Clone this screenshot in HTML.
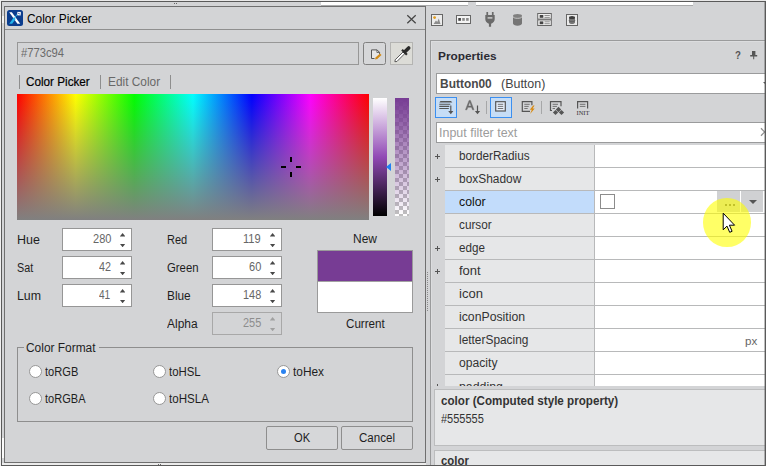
<!DOCTYPE html>
<html lang="en">
<head>
<meta charset="utf-8">
<title>Color Picker</title>
<style>
*{box-sizing:border-box;margin:0;padding:0}
html,body{width:766px;height:466px;overflow:hidden;background:#d3d4d6}
body{position:relative;font-family:"Liberation Sans",sans-serif;font-size:12px;color:#1e1e1e}
.a{position:absolute}
.t{position:absolute;white-space:nowrap;transform-origin:0 50%;display:block}
.t.clip{clip-path:inset(0 0 8.8px 0)}
.spin{position:absolute;width:70px;height:23px;background:#fff;border:1px solid #969696}
.spin.dis{background:#d3d4d6;border-color:#a8a8a8}
.spin i{position:absolute;left:56.8px;width:5.6px;height:3.5px;background:#484848}
.spin i.u{top:4.1px;clip-path:polygon(50% 0,100% 100%,0 100%)}
.spin i.d{top:14.7px;clip-path:polygon(0 0,100% 0,50% 100%)}
.spin.dis i{background:#a0a0a0}
.radio{position:absolute;width:13px;height:13px;border-radius:50%;background:#fff;border:1px solid #979797}
.radio.on::after{content:"";position:absolute;left:3px;top:3px;width:5px;height:5px;border-radius:50%;background:#2a82f0}
.btn{position:absolute;height:24px;border:1px solid #8e8e8e;border-radius:2px;background:#d6d7d9}
.row{position:absolute;left:445px;width:149px;height:23px;background:#e6e7e8;border-bottom:1px solid #b8b9ba}
.val{position:absolute;left:594px;width:171px;height:23px;background:#fff;border-bottom:1px solid #b8b9ba;border-left:1px solid #b8b9ba}
.plus{position:absolute;left:435px;width:5px;height:5px}
.plus::before{content:"";position:absolute;left:0;top:2px;width:5px;height:1px;background:#555}
.plus::after{content:"";position:absolute;left:2px;top:0;width:1px;height:5px;background:#555}
</style>
</head>
<body>
<!-- ===== right side: IDE panels ===== -->
<div class="a" id="right" style="left:426px;top:0;width:340px;height:466px;background:#d3d4d6"></div>

<!-- icon toolbar -->
<svg class="a" style="left:428px;top:10px" width="160" height="20" viewBox="428 10 160 20">
  <!-- image -->
  <rect x="431.5" y="14.5" width="11" height="11" fill="#ececec" stroke="#666"/>
  <circle cx="434.6" cy="17.6" r="1.4" fill="#e09a1a"/>
  <path d="M433.5 24 L436 20.5 L437.2 22 L438.8 18.5 L440.5 24 Z" fill="#8c8c8c"/>
  <!-- segmented -->
  <rect x="456.5" y="15.5" width="14" height="8" fill="#f4f4f4" stroke="#666"/>
  <rect x="458.3" y="18" width="2.6" height="2.8" fill="#444"/>
  <rect x="462.2" y="18" width="2.6" height="2.8" fill="#8a8a8a"/>
  <rect x="466.1" y="18" width="2.6" height="2.8" fill="#8a8a8a"/>
  <!-- plug -->
  <path d="M486.4 12h1.7v3.2h-1.7zM491.9 12h1.7v3.2h-1.7z" fill="#6a6a6a"/>
  <path d="M485.3 15h9.4v4.2c0 2-1.6 3.6-3.6 4.6v3h-2.2v-3c-2-1-3.6-2.6-3.6-4.6z" fill="#6a6a6a"/>
  <rect x="487.6" y="17.2" width="4.8" height="1.4" fill="#d0d0d0"/>
  <!-- cylinder -->
  <path d="M513 16v7.6c0 1.2 2 2.1 4.5 2.1s4.5-.9 4.500-2.100V16z" fill="#757575"/>
  <ellipse cx="517.5" cy="15.800" rx="4.5" ry="1.900" fill="#808080"/>
  <path d="M513 16.500c0 1.100 2 1.800 4.500 1.800s4.500-.7 4.500-1.800" fill="none" stroke="#dcdcdc" stroke-width=".8"/>
  <!-- form -->
  <rect x="537.7" y="13.500" width="13.600" height="5.600" fill="#f0f0f0" stroke="#666"/>
  <rect x="537.7" y="19.900" width="13.600" height="5.600" fill="#f0f0f0" stroke="#666"/>
  <rect x="539.700" y="15" width="3.600" height="2.800" fill="#444"/>
  <rect x="539.700" y="21.400" width="3.600" height="2.800" fill="#444"/>
  <path d="M544.500 15.500h5.300M544.500 17.400h5.300M544.500 21.800h5.300M544.500 23.700h5.300" stroke="#777" stroke-width=".8"/>
  <!-- db -->
  <rect x="566.500" y="14.500" width="11" height="11" fill="#eaeaea" stroke="#666"/>
  <path d="M569 17.500v5c0 .9 1.300 1.500 3 1.500s3-.6 3-1.500v-5z" fill="#777"/>
  <ellipse cx="572" cy="17.600" rx="3" ry="1.500" fill="#3c3c3c"/>
  <path d="M569 20.300c0 .9 1.300 1.400 3 1.400s3-.5 3-1.400" fill="none" stroke="#555" stroke-width=".7"/>
</svg>

<!-- properties panel frame -->
<div class="a" style="left:430px;top:40px;width:336px;height:1px;background:#9a9b9c"></div>
<div class="a" style="left:430px;top:40px;width:1px;height:426px;background:#9a9b9c"></div>
<div class="a" style="left:431px;top:41px;width:335px;height:1px;background:#dcdddf"></div>
<div class="a" style="left:431px;top:41px;width:1px;height:425px;background:#dcdddf"></div>
<!-- pin -->
<svg class="a" style="left:749px;top:50px" width="10" height="10" viewBox="749 50 10 10">
  <path d="M752 51h3.400v4h-3.400z M750.200 55h7v1.600h-7z M753.200 56.600h1v2.600h-1z" fill="#555"/>
</svg>
<!-- combo -->
<div class="a" style="left:436px;top:73px;width:330px;height:21px;background:#fff;border:1px solid #9a9b9c;border-right:0"></div>
<div class="a" style="left:763px;top:82px;width:0;height:0;border-left:3px solid transparent;border-right:3px solid transparent;border-top:3px solid #555"></div>
<!-- prop toolbar -->
<div class="a" style="left:435px;top:97px;width:22px;height:21px;background:#c6ddf6;border:1px solid #3b8ff0"></div>
<div class="a" style="left:490px;top:97px;width:22px;height:21px;background:#c6ddf6;border:1px solid #3b8ff0"></div>
<div class="a" style="left:486px;top:101px;width:1px;height:13px;background:#a6a7a8"></div>
<div class="a" style="left:541px;top:101px;width:1px;height:13px;background:#a6a7a8"></div>
<svg class="a" style="left:435px;top:97px" width="160" height="21" viewBox="435 97 160 21">
  <!-- categorized -->
  <path d="M440.500 101h10.500l1.300 1.600h-13z" fill="#555"/>
  <path d="M439.300 104.300h11M439.300 106.400h10M439.300 108.500h9.500" stroke="#555" stroke-width="1.100"/>
  <path d="M450.800 105.500v7" stroke="#555" stroke-width="1.200"/>
  <path d="M448.200 111h5.200l-2.600 3.300z" fill="#555"/>
  <!-- A down -->
  <path d="M465.500 109.800l3.600-9.400h1.300l3.600 9.400h-1.500l-.95-2.600h-3.700l-.95 2.600zM468.300 106h2.900l-1.450-4z" fill="#6a6a6a" stroke="#6a6a6a" stroke-width=".45"/>
  <path d="M477.500 105.500v7" stroke="#555" stroke-width="1.200"/>
  <path d="M474.900 111h5.200l-2.600 3.300z" fill="#555"/>
  <!-- list -->
  <rect x="495.700" y="101.700" width="9.600" height="9.300" fill="#e6eefa" stroke="#555" stroke-width="1.200"/>
  <path d="M497.800 104.300h5.400M497.800 106.400h5.400M497.800 108.500h5.400" stroke="#666" stroke-width=".9"/>
  <!-- event -->
  <path d="M530 111.300h-7.700v-9.600h9.600v3.500" fill="none" stroke="#555" stroke-width="1.200"/>
  <path d="M524.300 104.300h5.400M524.300 106.400h4.400M524.300 108.500h3.400" stroke="#666" stroke-width=".9"/>
  <path d="M533.200 105.500l-3.400 4.300h2l-1.700 4.300 4.600-5.500h-2.100l2-3.100z" fill="#d98a10"/>
  <!-- style -->
  <path d="M552 110.500h-1.500v-8.800h10.500v4.500" fill="none" stroke="#555" stroke-width="1.200"/>
  <path d="M552.600 104.300h5.400M552.600 106.400h4.400M552.600 108.500h2.400" stroke="#666" stroke-width=".9"/>
  <path d="M558.500 106.800l2.700 2.700-2.700 2.700-2.700-2.700zM555.500 109.900l2.600 2.600-2.600 2.600-2.600-2.600zM561.500 109.900l2.600 2.600-2.600 2.600-2.600-2.600z" fill="#555"/>
  <!-- init -->
  <path d="M577.600 108.500v-6.800h10v6.800" fill="none" stroke="#555" stroke-width="1.200"/>
  <path d="M579.800 104.300h5.600M579.800 106.400h5.600" stroke="#666" stroke-width=".9"/>
  <text x="576.600" y="114.600" font-family="Liberation Serif, serif" font-size="6.500" fill="#333" textLength="12.800" lengthAdjust="spacingAndGlyphs">INIT</text>
</svg>
<!-- filter -->
<div class="a" style="left:436px;top:122px;width:330px;height:21px;background:#fff;border:1px solid #9a9b9c;border-right:0"></div>
<svg class="a" style="left:758px;top:127px" width="8" height="12" viewBox="758 127 8 12"><path d="M761 128.300l7.400 7.400M761 135.700l7.400-7.400" stroke="#909090" stroke-width="1.300"/></svg>

<!-- grid -->
<div id="grid" class="a" style="left:431px;top:144px;width:335px;height:242px;overflow:hidden">
</div>
<div class="row" style="top:145px;height:23px;background:#e6e7e8"></div><div class="val" style="top:145px;height:23px"></div>
<div class="plus" style="top:154px"></div>
<div class="row" style="top:168px;height:23px;background:#e6e7e8"></div><div class="val" style="top:168px;height:23px"></div>
<div class="plus" style="top:177px"></div>
<div class="row" style="top:191px;height:23px;background:#c2dcfb"></div><div class="val" style="top:191px;height:23px"></div>
<div class="row" style="top:214px;height:23px;background:#e6e7e8"></div><div class="val" style="top:214px;height:23px"></div>
<div class="row" style="top:237px;height:23px;background:#e6e7e8"></div><div class="val" style="top:237px;height:23px"></div>
<div class="plus" style="top:246px"></div>
<div class="row" style="top:260px;height:23px;background:#e6e7e8"></div><div class="val" style="top:260px;height:23px"></div>
<div class="plus" style="top:269px"></div>
<div class="row" style="top:283px;height:23px;background:#e6e7e8"></div><div class="val" style="top:283px;height:23px"></div>
<div class="row" style="top:306px;height:23px;background:#e6e7e8"></div><div class="val" style="top:306px;height:23px"></div>
<div class="row" style="top:329px;height:23px;background:#e6e7e8"></div><div class="val" style="top:329px;height:23px"></div>
<div class="row" style="top:352px;height:23px;background:#e6e7e8"></div><div class="val" style="top:352px;height:23px"></div>
<div class="row" style="top:375px;height:11px;background:#e6e7e8;border-bottom:0"></div><div class="val" style="top:375px;height:11px;border-bottom:0"></div>
<div class="plus" style="top:384px"></div>
<!-- color row widgets -->
<div class="a" style="left:600px;top:194px;width:15px;height:15px;background:#fff;border:1px solid #8c8c8c"></div>
<div class="a" style="left:717px;top:191px;width:23px;height:21px;background:#d0d1d3"></div>
<div class="a" style="left:741px;top:191px;width:22px;height:21px;background:#d0d1d3"></div>
<div class="a" style="left:725px;top:204px;width:2px;height:2px;background:#666"></div>
<div class="a" style="left:729px;top:204px;width:2px;height:2px;background:#666"></div>
<div class="a" style="left:733px;top:204px;width:2px;height:2px;background:#666"></div>
<div class="a" style="left:749px;top:200px;width:0;height:0;border-left:4px solid transparent;border-right:4px solid transparent;border-top:4px solid #555"></div>

<!-- below grid -->
<div class="a" style="left:431px;top:386px;width:335px;height:80px;background:#d3d4d6"></div>
<div class="a" style="left:434px;top:389px;width:332px;height:57px;background:#e6e7e8;border:1px solid #bcbdbe;border-right:0"></div>
<div class="a" style="left:434px;top:450px;width:332px;height:20px;background:#e6e7e8;border:1px solid #bcbdbe;border-right:0"></div>

<div class="a" style="left:427px;top:272px;width:1px;height:40px;background:repeating-linear-gradient(to bottom,#8a8a8a 0,#8a8a8a 1px,transparent 1px,transparent 2px)"></div>
<!-- ===== dialog ===== -->
<div class="a" style="left:2px;top:2px;width:424px;height:463px;background:#d3d4d6"></div>
<!-- top strip remnants -->
<div class="a" style="left:0;top:0;width:766px;height:1px;background:#e9e9e9"></div>
<div class="a" style="left:321px;top:2px;width:147px;height:3px;background:#fff"></div>
<div class="a" style="left:476px;top:2px;width:217px;height:3px;background:#fff"></div>
<div class="a" style="left:321px;top:5px;width:147px;height:1px;background:#a9aaab"></div>
<div class="a" style="left:476px;top:5px;width:217px;height:1px;background:#a9aaab"></div>
<div class="a" style="left:174px;top:3px;width:1px;height:1px;background:#666"></div>
<div class="a" style="left:176px;top:3px;width:1px;height:1px;background:#666"></div>
<div class="a" style="left:2px;top:16px;width:2px;height:7px;background:#f4f4f4"></div>
<div class="a" style="left:2px;top:438px;width:2px;height:20px;background:#fbfbfb"></div>
<div class="a" style="left:2px;top:463px;width:424px;height:2px;background:#ececec"></div>
<div class="a" id="dlg" style="left:4px;top:6px;width:422px;height:457px;background:#d3d4d6;border:1px solid #6f6f6f"></div>
<div class="a" style="left:5px;top:29px;width:420px;height:1px;background:#8f8f8f"></div>
<!-- app icon -->
<svg class="a" style="left:7px;top:10px" width="16" height="16" viewBox="0 0 16 16">
  <rect width="16" height="16" rx="2.500" fill="#0b3d8e"/>
  <path d="M2.200 2.300h2.600l8.400 11.400h-2.800z" fill="#fff"/>
  <path d="M2.200 13.700l4.900-6.600 1.500 2-3.400 4.600z" fill="#22b4ec"/>
  <path d="M8 7.300l2.500-3.300" stroke="#22b4ec" stroke-width=".9"/>
  <rect x="10.300" y="1.900" width="3.500" height="3.500" fill="#fff"/>
  <path d="M11.300 2.900l1.500 1.500" stroke="#0b3d8e" stroke-width="1"/>
</svg>
<!-- close -->
<svg class="a" style="left:405px;top:13px" width="13" height="13" viewBox="405 13 13 13"><path d="M407.300 15.200l8.400 8M415.700 15.200l-8.400 8" stroke="#444" stroke-width="1.200"/></svg>
<!-- hex input -->
<div class="a" style="left:17px;top:42px;width:342px;height:23px;border:1px solid #979797;background:#d3d4d6"></div>
<!-- edit btn -->
<div class="a" style="left:363px;top:42px;width:23px;height:23px;border:1px solid #808080;border-radius:2.500px;background:#d6d7d9"></div>
<svg class="a" style="left:368px;top:46px" width="16" height="16" viewBox="368 46 16 16">
  <path d="M371.500 50h5.300l2.500 2.500v6h-7.800z" fill="#e6e6e6"/>
  <path d="M374.500 58.500h-3v-8.600h5.600l2.400 2.400v1.600" fill="none" stroke="#555" stroke-width="1"/>
  <path d="M376.900 50v2.500h2.500" fill="none" stroke="#555" stroke-width=".8"/>
  <path d="M375 59.600l.8-2.300 4.200-3.700 1.500 1.500-4.200 3.800z" fill="#d28b17"/>
</svg>
<!-- eyedropper btn -->
<div class="a" style="left:390px;top:42px;width:23px;height:23px;border:1px solid #b4b4b2;background:#dcdcd7"></div>
<svg class="a" style="left:392px;top:44px" width="20" height="20" viewBox="392 44 20 20">
  <path d="M394.900 61.700l.300-1.900 7.800-7.800 1.700 1.700-7.800 7.800z" fill="#fff" stroke="#333" stroke-width=".8"/>
  <path d="M402 49.800l4.900 4.900" stroke="#2a2a2a" stroke-width="2.200"/>
  <path d="M405.400 51.300l3.300-3.300" stroke="#2a2a2a" stroke-width="3.600" stroke-linecap="round"/>
</svg>
<!-- tabs -->
<div class="a" style="left:19px;top:75px;width:1px;height:14px;background:#8e8e8e"></div>
<div class="a" style="left:100px;top:75px;width:1px;height:14px;background:#8e8e8e"></div>
<div class="a" style="left:170px;top:75px;width:1px;height:14px;background:#8e8e8e"></div>
<!-- picker area -->
<div class="a" style="left:17px;top:94px;width:352px;height:126px;background:linear-gradient(to right,#f00 0%,#ff0 16.667%,#0f0 33.333%,#0ff 50%,#00f 66.667%,#f0f 83.333%,#f00 100%)"></div>
<div class="a" style="left:17px;top:94px;width:352px;height:126px;background:linear-gradient(to bottom,rgba(128,128,128,0),rgba(128,128,128,1))"></div>
<!-- crosshair -->
<div class="a" style="left:290px;top:157px;width:2px;height:5px;background:#000"></div>
<div class="a" style="left:290px;top:172px;width:2px;height:5px;background:#000"></div>
<div class="a" style="left:281px;top:166px;width:5px;height:2px;background:#000"></div>
<div class="a" style="left:296px;top:166px;width:5px;height:2px;background:#000"></div>
<!-- lum bar -->
<div class="a" style="left:373px;top:98px;width:14px;height:118px;background:linear-gradient(to bottom,#fff 0%,#914ab5 50%,#000 100%)"></div>
<div class="a" style="left:386px;top:163px;width:0;height:0;border-top:4.5px solid transparent;border-bottom:4.5px solid transparent;border-right:5px solid #1f80f5"></div>
<!-- alpha bar -->
<div class="a" style="left:395px;top:98px;width:14px;height:118px;background:repeating-conic-gradient(#bfbfbf 0% 25%,#fff 0% 50%) 4px 0/8px 8px"></div>
<div class="a" style="left:395px;top:98px;width:14px;height:118px;background:linear-gradient(to bottom,rgba(119,60,148,1),rgba(119,60,148,0))"></div>
<!-- spin boxes -->
<div class="spin" style="left:62px;top:228px"><i class="u"></i><i class="d"></i></div>
<div class="spin" style="left:62px;top:256px"><i class="u"></i><i class="d"></i></div>
<div class="spin" style="left:62px;top:284px"><i class="u"></i><i class="d"></i></div>
<div class="spin" style="left:212px;top:228px"><i class="u"></i><i class="d"></i></div>
<div class="spin" style="left:212px;top:256px"><i class="u"></i><i class="d"></i></div>
<div class="spin" style="left:212px;top:284px"><i class="u"></i><i class="d"></i></div>
<div class="spin dis" style="left:212px;top:312px"><i class="u"></i><i class="d"></i></div>
<!-- new/current -->
<div class="a" style="left:317px;top:250px;width:96px;height:63px;background:#fff;border:1px solid #9a9a9a"></div>
<div class="a" style="left:318px;top:251px;width:94px;height:30px;background:#773c94"></div>
<div class="a" style="left:318px;top:281px;width:94px;height:1px;background:#a2a2a2"></div>
<!-- group box -->
<div class="a" style="left:17px;top:347px;width:396px;height:75px;border:1px solid #8e8e8e"></div>
<div class="a" style="left:24px;top:345px;width:75px;height:5px;background:#d3d4d6"></div>
<div class="radio" style="left:29px;top:365px"></div>
<div class="radio" style="left:29px;top:392px"></div>
<div class="radio" style="left:153px;top:365px"></div>
<div class="radio" style="left:153px;top:392px"></div>
<div class="radio on" style="left:277px;top:365px"></div>
<!-- buttons -->
<div class="btn" style="left:266px;top:426px;width:72px"></div>
<div class="btn" style="left:341px;top:426px;width:72px"></div>

<!-- ===== all text ===== -->
<span class="t" style="left:27px;top:12.38px;font-size:12.5px;line-height:14.37px;color:#000;transform:scaleX(0.9517);">Color Picker</span>
<span class="t" style="left:21px;top:46.84px;font-size:12px;line-height:13.8px;color:#6b6b6b;transform:scaleX(0.9353);">#773c94</span>
<span class="t" style="left:26px;top:75.38px;font-size:12.5px;line-height:14.37px;color:#000;-webkit-text-stroke:0.2px #000;transform:scaleX(0.9368);">Color Picker</span>
<span class="t" style="left:108px;top:75.38px;font-size:12.5px;line-height:14.37px;color:#686868;transform:scaleX(0.9491);">Edit Color</span>
<span class="t" style="left:17px;top:233.38px;font-size:12.5px;line-height:14.37px;color:#1e1e1e;transform:scaleX(0.9983);">Hue</span>
<span class="t" style="left:17px;top:261.38px;font-size:12.5px;line-height:14.37px;color:#1e1e1e;transform:scaleX(0.8621);">Sat</span>
<span class="t" style="left:17px;top:289.38px;font-size:12.5px;line-height:14.37px;color:#1e1e1e;transform:scaleX(0.9885);">Lum</span>
<span class="t" style="left:93px;top:232.38px;font-size:12.5px;line-height:14.37px;color:#666666;transform:scaleX(0.8822);">280</span>
<span class="t" style="left:99px;top:260.38px;font-size:12.5px;line-height:14.37px;color:#666666;transform:scaleX(0.8624);">42</span>
<span class="t" style="left:99px;top:288.38px;font-size:12.5px;line-height:14.37px;color:#666666;transform:scaleX(0.8073);">41</span>
<span class="t" style="left:167px;top:233.38px;font-size:12.5px;line-height:14.37px;color:#1e1e1e;transform:scaleX(0.8803);">Red</span>
<span class="t" style="left:167px;top:261.38px;font-size:12.5px;line-height:14.37px;color:#1e1e1e;transform:scaleX(0.9080);">Green</span>
<span class="t" style="left:167px;top:289.38px;font-size:12.5px;line-height:14.37px;color:#1e1e1e;transform:scaleX(0.9469);">Blue</span>
<span class="t" style="left:167px;top:317.38px;font-size:12.5px;line-height:14.37px;color:#1e1e1e;transform:scaleX(0.9564);">Alpha</span>
<span class="t" style="left:243px;top:232.38px;font-size:12.5px;line-height:14.37px;color:#666666;transform:scaleX(0.8865);">119</span>
<span class="t" style="left:249px;top:260.38px;font-size:12.5px;line-height:14.37px;color:#666666;transform:scaleX(0.8816);">60</span>
<span class="t" style="left:243px;top:288.38px;font-size:12.5px;line-height:14.37px;color:#666666;transform:scaleX(0.8729);">148</span>
<span class="t" style="left:243px;top:316.38px;font-size:12.5px;line-height:14.37px;color:#8d8d8d;transform:scaleX(0.8758);">255</span>
<span class="t" style="left:353px;top:232.38px;font-size:12.5px;line-height:14.37px;color:#1e1e1e;transform:scaleX(0.9568);">New</span>
<span class="t" style="left:346px;top:316.88px;font-size:12.5px;line-height:14.37px;color:#1e1e1e;transform:scaleX(0.9308);">Current</span>
<span class="t" style="left:26px;top:341.08px;font-size:12.5px;line-height:14.37px;color:#1e1e1e;transform:scaleX(0.9539);">Color Format</span>
<span class="t" style="left:45px;top:365.38px;font-size:12.5px;line-height:14.37px;color:#1e1e1e;transform:scaleX(0.8870);">toRGB</span>
<span class="t" style="left:45px;top:392.38px;font-size:12.5px;line-height:14.37px;color:#1e1e1e;transform:scaleX(0.8832);">toRGBA</span>
<span class="t" style="left:169px;top:365.38px;font-size:12.5px;line-height:14.37px;color:#1e1e1e;transform:scaleX(0.9130);">toHSL</span>
<span class="t" style="left:169px;top:392.38px;font-size:12.5px;line-height:14.37px;color:#1e1e1e;transform:scaleX(0.9259);">toHSLA</span>
<span class="t" style="left:293px;top:365.38px;font-size:12.5px;line-height:14.37px;color:#1e1e1e;transform:scaleX(0.9495);">toHex</span>
<span class="t" style="left:294px;top:431.38px;font-size:12.5px;line-height:14.37px;color:#1e1e1e;transform:scaleX(0.8917);">OK</span>
<span class="t" style="left:359px;top:431.38px;font-size:12.5px;line-height:14.37px;color:#1e1e1e;transform:scaleX(0.9246);">Cancel</span>
<span class="t" style="left:438px;top:49.41px;font-size:11.6px;line-height:13.34px;color:#2b2b33;font-weight:700;transform:scaleX(1.0209);">Properties</span>
<span class="t" style="left:735px;top:49.03px;font-size:10.5px;line-height:12.07px;color:#555;font-weight:700;transform:scaleX(0.9185);">?</span>
<span class="t" style="left:440px;top:77.38px;font-size:12.5px;line-height:14.37px;color:#4a4a4a;font-weight:700;transform:scaleX(0.9555);">Button00</span>
<span class="t" style="left:501px;top:77.38px;font-size:12.5px;line-height:14.37px;color:#444;transform:scaleX(0.9974);">(Button)</span>
<span class="t" style="left:439px;top:126.08px;font-size:12.5px;line-height:14.37px;color:#9c9c9c;transform:scaleX(0.9971);">Input filter text</span>
<span class="t" style="left:459px;top:149.38px;font-size:12.5px;line-height:14.37px;color:#333;transform:scaleX(0.9410);">borderRadius</span>
<span class="t" style="left:459px;top:172.38px;font-size:12.5px;line-height:14.37px;color:#333;transform:scaleX(0.9532);">boxShadow</span>
<span class="t" style="left:459px;top:195.38px;font-size:12.5px;line-height:14.37px;color:#111;transform:scaleX(0.9827);">color</span>
<span class="t" style="left:459px;top:218.38px;font-size:12.5px;line-height:14.37px;color:#333;transform:scaleX(0.9408);">cursor</span>
<span class="t" style="left:459px;top:241.38px;font-size:12.5px;line-height:14.37px;color:#333;transform:scaleX(0.9318);">edge</span>
<span class="t" style="left:459px;top:264.38px;font-size:12.5px;line-height:14.37px;color:#333;transform:scaleX(1.0421);">font</span>
<span class="t" style="left:459px;top:287.38px;font-size:12.5px;line-height:14.37px;color:#333;transform:scaleX(1.0428);">icon</span>
<span class="t" style="left:459px;top:310.38px;font-size:12.5px;line-height:14.37px;color:#333;transform:scaleX(0.9800);">iconPosition</span>
<span class="t" style="left:459px;top:333.38px;font-size:12.5px;line-height:14.37px;color:#333;transform:scaleX(0.9516);">letterSpacing</span>
<span class="t" style="left:459px;top:356.38px;font-size:12.5px;line-height:14.37px;color:#333;transform:scaleX(0.9710);">opacity</span>
<span class="t clip" style="left:459px;top:380.38px;font-size:12.5px;line-height:14.37px;color:#333;transform:scaleX(0.9876);">padding</span>
<span class="t" style="left:745px;top:335.01px;font-size:11.5px;line-height:13.22px;color:#666;transform:scaleX(1.0078);">px</span>
<span class="t" style="left:441px;top:394.38px;font-size:12.5px;line-height:14.37px;color:#333;font-weight:700;transform:scaleX(0.9309);">color (Computed style property)</span>
<span class="t" style="left:441px;top:412.84px;font-size:12px;line-height:13.8px;color:#333;transform:scaleX(0.9164);">#555555</span>
<span class="t" style="left:441px;top:453.88px;font-size:12.5px;line-height:14.37px;color:#333;font-weight:700;transform:scaleX(0.9106);">color</span>

<!-- cursor highlight -->
<div class="a" style="left:703px;top:198px;width:47.5px;height:48.5px;border-radius:50%;background:rgba(255,255,0,.6)"></div>
<svg class="a" style="left:722px;top:212px" width="14" height="22" viewBox="0 0 14 22">
  <path d="M1.200 1.200v16.600l3.800-3.700 2.700 6.200 2.400-1-2.700-6.100h5.200z" fill="#fff" stroke="#000" stroke-width="1" stroke-linejoin="miter"/>
</svg>
<div class="a" style="left:764px;top:2px;width:1px;height:463px;background:rgba(90,90,90,.4)"></div>
<div class="a" style="left:158px;top:464px;width:1px;height:1px;background:#666"></div><div class="a" style="left:160px;top:464px;width:1px;height:1px;background:#666"></div>
<!-- outer frame -->
<div class="a" style="left:1px;top:1px;width:765px;height:465px;border:1px solid #5a5a5a;pointer-events:none"></div>
<div class="a" style="left:0;top:0;width:1px;height:466px;background:#f0f0f0"></div>
</body>
</html>
